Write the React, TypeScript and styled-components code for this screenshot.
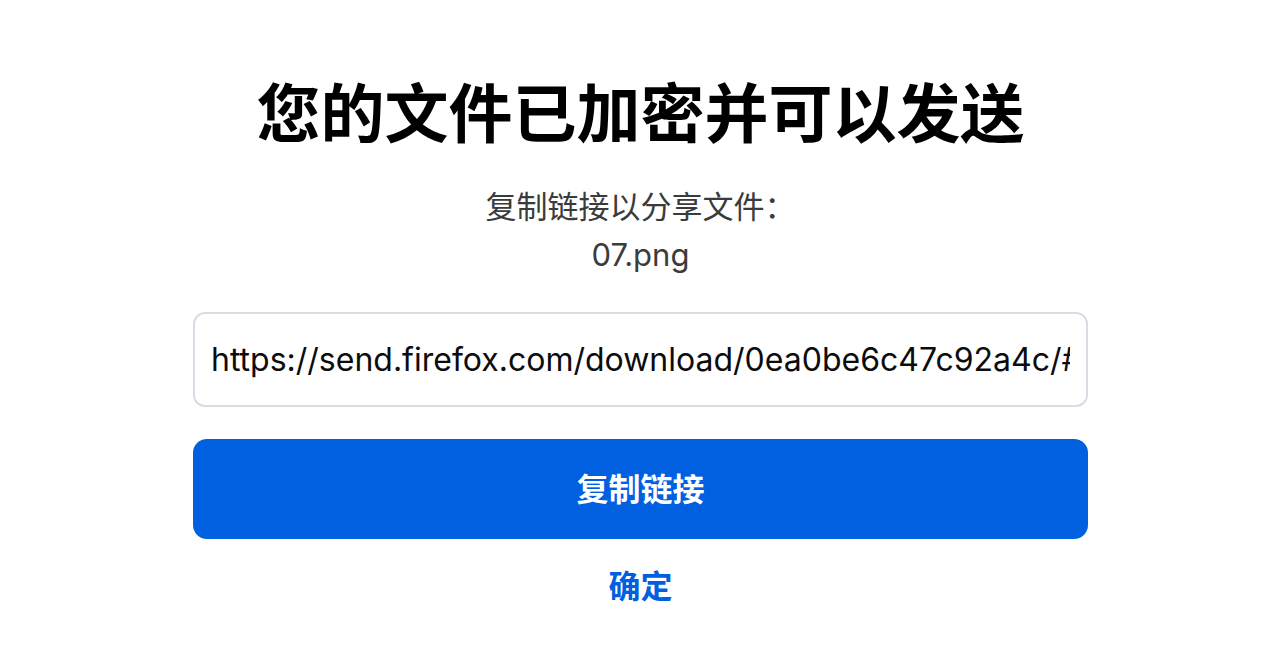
import styled, { createGlobalStyle } from "styled-components"

const Global = createGlobalStyle`
    body {
        margin: 0;
        background: #ffffff;
        font-family: Inter, "Noto Sans CJK SC", sans-serif;
    }
`

const App = () => {
    return (
        <Page>
            <Global />
            <Panel>
                <Title>您的文件已加密并可以发送</Title>
                <Subtitle>
                    复制链接以分享文件：
                    <br />
                    07.png
                </Subtitle>
                <LinkInput
                    readOnly
                    value="https://send.firefox.com/download/0ea0be6c47c92a4c/#Xk2pQ9sLw7vR3mT0aYbC1g"
                />
                <CopyButton>复制链接</CopyButton>
                <OkLink>确定</OkLink>
            </Panel>
        </Page>
    )
}

export default App

const Page = styled.div`
    width: 100%;
    min-height: 660px;
    display: flex;
    justify-content: center;
    padding-left: 1px;
    box-sizing: border-box;
`

const Panel = styled.div`
    width: 895px;
    padding-top: 75px;
    display: flex;
    flex-direction: column;
    align-items: center;
`

const Title = styled.h1`
    margin: 0;
    font-size: 64px;
    line-height: 77px;
    font-weight: bold;
    color: #000000;
    text-align: center;
`

const Subtitle = styled.p`
    margin: 31px 0 0;
    font-size: 31px;
    line-height: 48px;
    color: #3b3b3b;
    text-align: center;
`

const LinkInput = styled.input`
    box-sizing: border-box;
    width: 100%;
    height: 95px;
    margin-top: 33px;
    padding: 0 16px;
    border: 2px solid #d7dde4;
    border-radius: 12px;
    font-family: Inter, "Noto Sans CJK SC", sans-serif;
    font-size: 32px;
    color: #0c0c0d;
    background: #ffffff;
    outline: none;
`

const CopyButton = styled.button`
    width: 100%;
    height: 100px;
    margin-top: 32px;
    padding: 0 0 5px;
    border: none;
    border-radius: 14px;
    background: #0060df;
    color: #ffffff;
    font-family: Inter, "Noto Sans CJK SC", sans-serif;
    font-size: 32px;
    font-weight: bold;
    cursor: pointer;
`

const OkLink = styled.a`
    margin-top: 24px;
    font-size: 32px;
    line-height: 48px;
    font-weight: bold;
    color: #0060df;
    cursor: pointer;
`
